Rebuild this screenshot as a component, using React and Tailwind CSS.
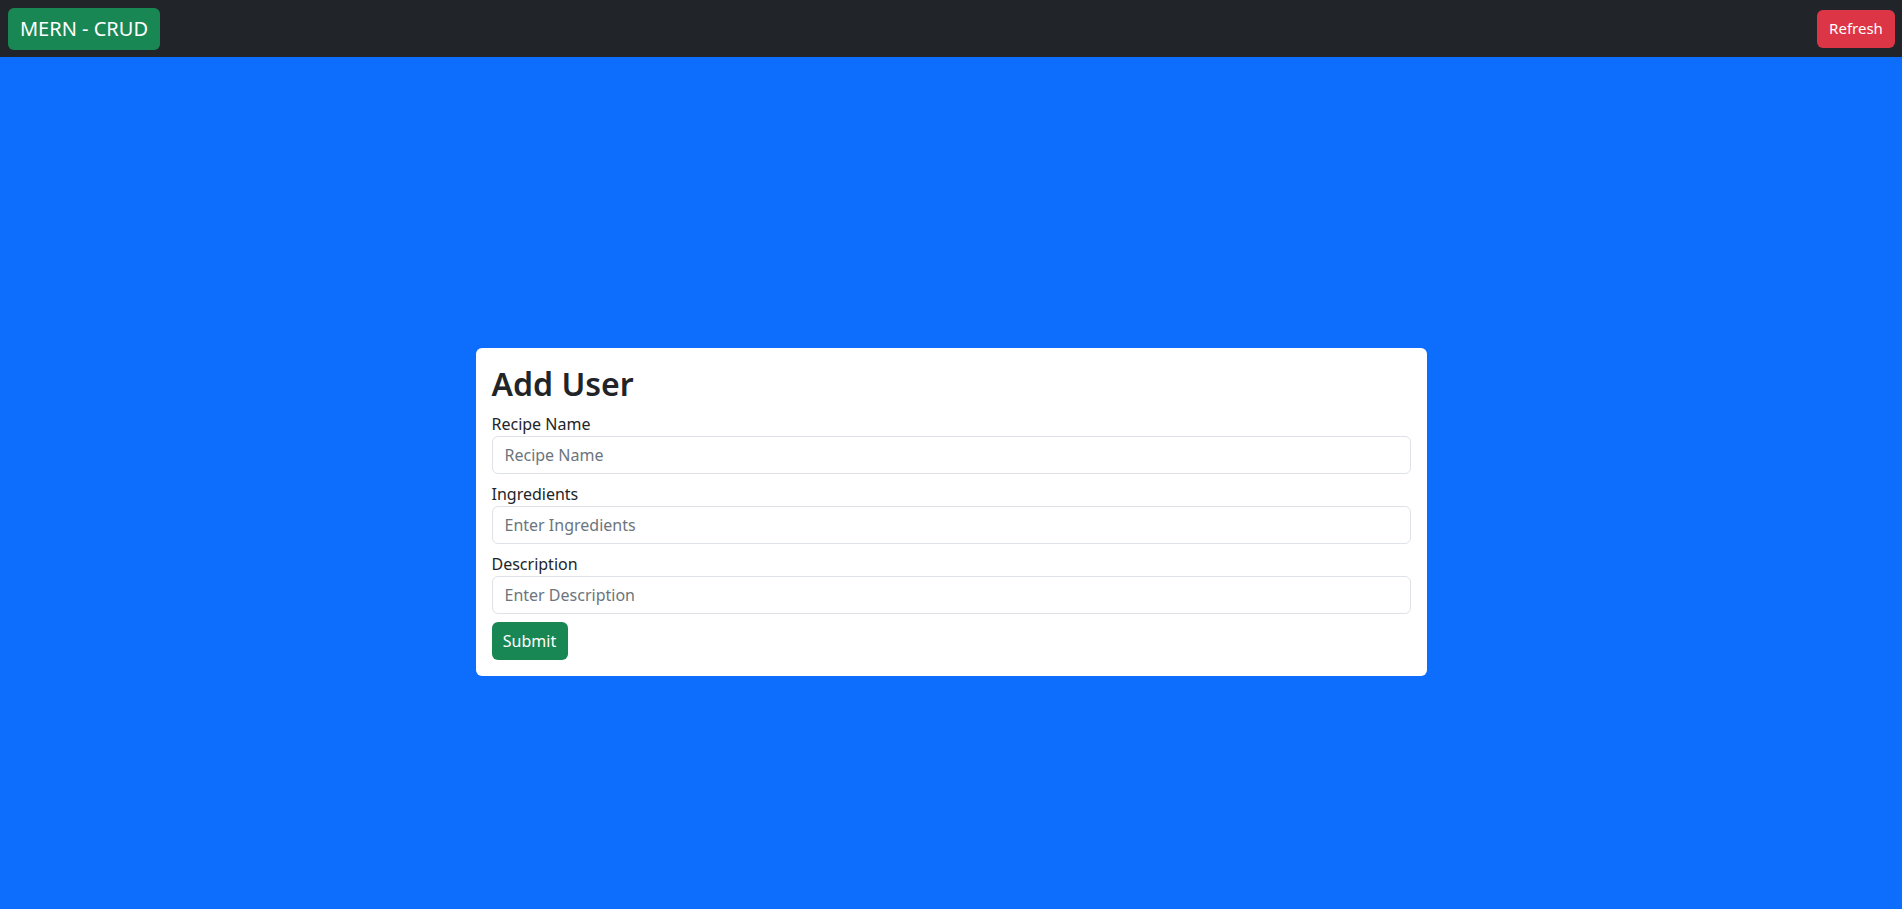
import React, { useState } from 'react';

// Simple add-recipe form page, bootstrap-like look
const FONT = { fontFamily: '"Segoe UI", "Noto Sans", "Open Sans", sans-serif' };

function Field({ label, placeholder, value, onChange }) {
  return (
    <div className="mb-2">
      <label className="block text-[16px] leading-6 text-[#212529]">{label}</label>
      <input
        type="text"
        value={value}
        onChange={(e) => onChange(e.target.value)}
        placeholder={placeholder}
        className="block w-full h-[38px] px-3 text-[16px] text-[#212529] bg-white border border-[#dee2e6] rounded-md placeholder-[#6c757d] focus:outline-none"
      />
    </div>
  );
}

export default function App() {
  const [name, setName] = useState('');
  const [ingredients, setIngredients] = useState('');
  const [description, setDescription] = useState('');

  return (
    <div className="h-screen overflow-hidden bg-[#0d6efd]" style={FONT}>
      {/* Navbar */}
      <nav className="h-[57px] bg-[#212529] flex items-center justify-between pl-2 pr-[7px]">
        <button className="h-[42px] w-[152px] rounded-md bg-[#198754] text-white text-[20px]">
          MERN - CRUD
        </button>
        <button className="h-[38px] w-[78px] rounded-md bg-[#dc3545] text-white text-[15px]">
          Refresh
        </button>
      </nav>

      {/* Form card */}
      <div className="h-screen flex items-center justify-center">
        <form
          onSubmit={(e) => e.preventDefault()}
          className="w-1/2 bg-white rounded-md p-4"
        >
          <h2 className="text-[32px] leading-[40px] font-semibold text-[#212529] mb-2">Add User</h2>
          <Field label="Recipe Name" placeholder="Recipe Name" value={name} onChange={setName} />
          <Field label="Ingredients" placeholder="Enter Ingredients" value={ingredients} onChange={setIngredients} />
          <Field label="Description" placeholder="Enter Description" value={description} onChange={setDescription} />
          <button
            type="submit"
            className="h-[38px] w-[76px] rounded-md bg-[#198754] text-white text-[16px]"
          >
            Submit
          </button>
        </form>
      </div>
    </div>
  );
}
